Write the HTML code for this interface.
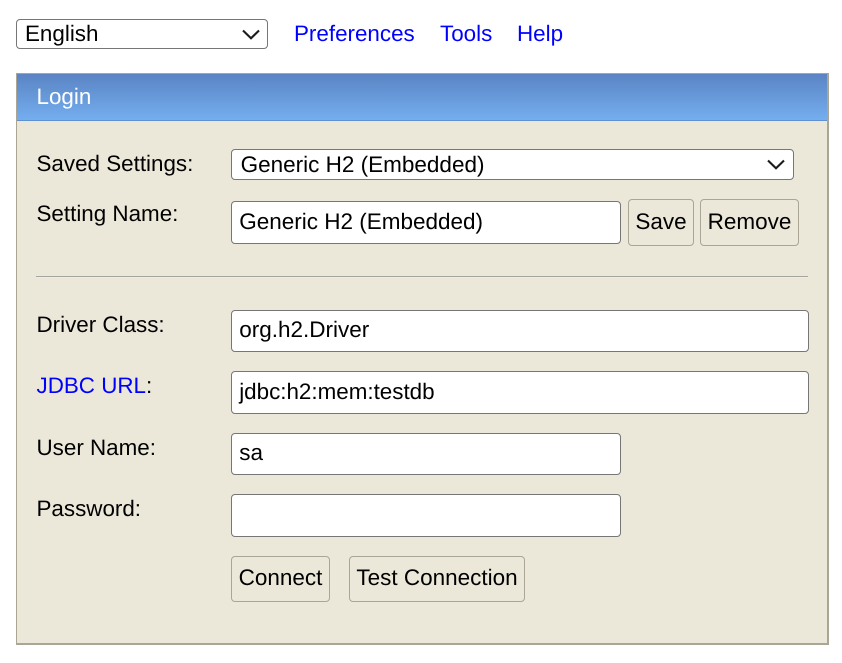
<!DOCTYPE html>
<html><head><meta charset="utf-8"><style>
html,body{margin:0;padding:0;background:#fff;width:842px;height:663px;overflow:hidden}
body{font-family:"Liberation Sans",Arial,sans-serif;font-size:22.4px;color:#000;text-rendering:geometricPrecision;position:relative}
.t{position:absolute;white-space:nowrap;line-height:26px;height:26px}
a{color:#00f;text-decoration:none}
.b{position:absolute;box-sizing:border-box;border-radius:4px}
.i{background:#fff;border:1px solid #767676;padding-left:7.2px;white-space:nowrap;font-size:22.5px}
.s{background:#fff;border:1px solid #767676;white-space:nowrap;padding-left:8.6px;font-size:22.5px}
.k{background:#ece8d9;border:1px solid #aaa595;text-align:center;white-space:nowrap;font-size:22.5px}
svg{position:absolute}
</style></head><body>
<div class="b s" style="left:16px;top:19px;width:252px;height:30px;line-height:28px;padding-left:8px;font-size:22.4px">English<svg style="left:224.5px;top:9px" width="18" height="11" viewBox="0 0 18 11"><path d="M1 1.5L9 9.3L17 1.5" fill="none" stroke="#1c1c1c" stroke-width="2.1"/></svg></div>
<a class="t" style="left:294px;top:21px">Preferences</a>
<a class="t" style="left:440px;top:21px">Tools</a>
<a class="t" style="left:517px;top:21px">Help</a>

<div style="position:absolute;left:16px;top:73px;width:813px;height:572px;box-sizing:border-box;background:#ece8d9;border-left:1px solid #aaa595;border-top:1px solid #aaa595;border-right:2px solid #aaa595;border-bottom:2px solid #aaa595"></div>
<div style="position:absolute;left:17px;top:74px;width:810px;height:47px;box-sizing:border-box;background:linear-gradient(#5a84c4,#74aeef);border-bottom:1px solid #5f90d2"></div>
<div class="t" style="left:36.5px;top:84px;color:#fff">Login</div>

<div class="t" style="left:36.5px;top:151px">Saved Settings:</div>
<div class="b s" style="left:231px;top:149px;width:563px;height:31px;line-height:29px">Generic H2 (Embedded)<svg style="left:535.3px;top:9px" width="18" height="11" viewBox="0 0 18 11"><path d="M1 1.5L9 9.3L17 1.5" fill="none" stroke="#1c1c1c" stroke-width="2.1"/></svg></div>

<div class="t" style="left:36.5px;top:201px">Setting Name:</div>
<div class="b i" style="left:231px;top:201px;width:390px;height:43px;line-height:39px">Generic H2 (Embedded)</div>
<div class="b k" style="left:628px;top:199px;width:66px;height:47px;line-height:43px">Save</div>
<div class="b k" style="left:700px;top:199px;width:99px;height:47px;line-height:43px">Remove</div>

<div style="position:absolute;left:36px;top:276px;width:772px;height:1px;background:#a5a5a0"></div>
<div style="position:absolute;left:37px;top:277px;width:771px;height:1px;background:#f0eee4"></div>

<div class="t" style="left:36.5px;top:312px">Driver Class:</div>
<div class="b i" style="left:231px;top:310px;width:578px;height:42px;line-height:38px">org.h2.Driver</div>

<div class="t" style="left:36.5px;top:373px"><a>JDBC URL</a>:</div>
<div class="b i" style="left:231px;top:371px;width:578px;height:43px;line-height:39px;font-size:22.4px">jdbc:h2:mem:testdb</div>

<div class="t" style="left:36.5px;top:435px">User Name:</div>
<div class="b i" style="left:231px;top:433px;width:390px;height:42px;line-height:38px">sa</div>

<div class="t" style="left:36.5px;top:496px">Password:</div>
<div class="b i" style="left:231px;top:494px;width:390px;height:43px"></div>

<div class="b k" style="left:231px;top:556px;width:99px;height:46px;line-height:42px">Connect</div>
<div class="b k" style="left:349px;top:556px;width:176px;height:46px;line-height:42px">Test Connection</div>
</body></html>
